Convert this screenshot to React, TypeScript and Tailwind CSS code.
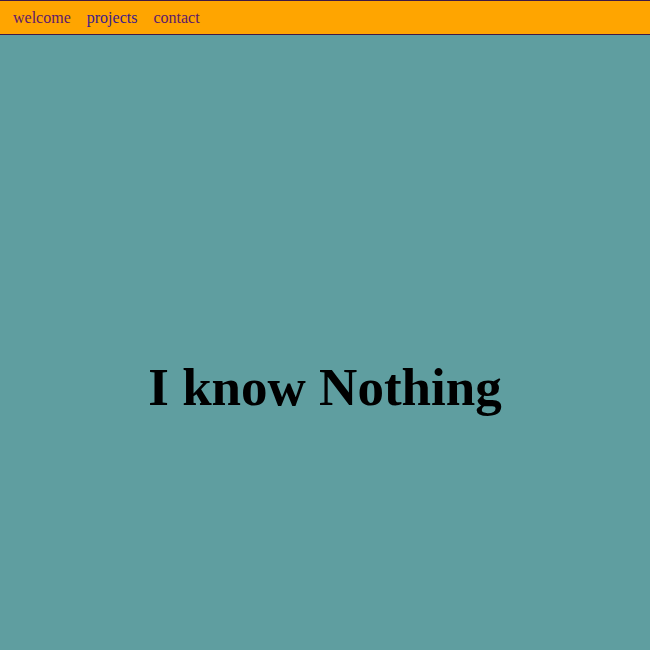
const LINKS = [
  { href: '#welcome', label: 'welcome', color: 'text-[#5c1a6b]' },
  { href: '#projects', label: 'projects', color: 'text-[#3b1a8c]' },
  { href: '#contact', label: 'contact', color: 'text-[#5c1a6b]' },
];

export default function App() {
  return (
    <div className="min-h-[650px] bg-[#5f9ea0] font-['Liberation_Serif',serif]">
      <nav className="h-[35px] bg-[#ffa500] border-y border-[#3f1a45] flex items-center px-[13px] gap-[16px] text-[16px]">
        {LINKS.map(({ href, label, color }) => (
          <a key={href} href={href} className={`${color} leading-none`}>
            {label}
          </a>
        ))}
      </nav>

      <main className="pt-[322px] text-center">
        <h1 className="text-[53px] leading-[1.15] font-bold text-black">I know Nothing</h1>
      </main>
    </div>
  );
}
